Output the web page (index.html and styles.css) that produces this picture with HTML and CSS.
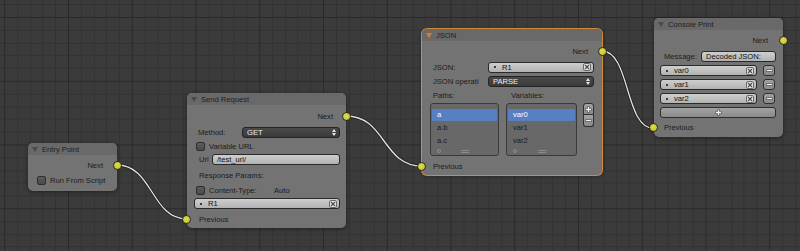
FILE: index.html
```html
<!DOCTYPE html>
<html>
<head>
<meta charset="utf-8">
<link rel="stylesheet" href="styles.css">
</head>
<body>
<div class="canvas">
  <svg class="backdrop" width="800" height="251" viewBox="0 0 800 251">
    <defs>
      <pattern id="grid" x="4.25" y="17" width="63.75" height="63.75" patternUnits="userSpaceOnUse">
        <g shape-rendering="crispEdges">
          <rect x="12.75" y="0" width="1" height="63.75" fill="#333333"/>
          <rect x="25.5" y="0" width="1" height="63.75" fill="#333333"/>
          <rect x="38.25" y="0" width="1" height="63.75" fill="#333333"/>
          <rect x="51" y="0" width="1" height="63.75" fill="#333333"/>
          <rect x="0" y="12.75" width="63.75" height="1" fill="#333333"/>
          <rect x="0" y="25.5" width="63.75" height="1" fill="#333333"/>
          <rect x="0" y="38.25" width="63.75" height="1" fill="#333333"/>
          <rect x="0" y="51" width="63.75" height="1" fill="#333333"/>
          <rect x="0" y="0" width="1" height="63.75" fill="#2a2a2a"/>
          <rect x="0" y="0" width="63.75" height="1" fill="#2a2a2a"/>
        </g>
      </pattern>
    </defs>
    <rect width="800" height="251" fill="#3b3b3b"/>
    <rect width="800" height="251" fill="url(#grid)"/>
    <g class="wire">
      <path d="M117,165 C153,165 151,219 187,219"/>
      <path d="M346,116 C386,116 382,166 422,166"/>
      <path d="M602,51 C630,51 625,128 653,128"/>
    </g>
    <g class="wire-core">
      <path d="M117,165 C153,165 151,219 187,219"/>
      <path d="M346,116 C386,116 382,166 422,166"/>
      <path d="M602,51 C630,51 625,128 653,128"/>
    </g>
  </svg>

  <!-- Entry Point -->
  <div class="node node-entry">
    <div class="node-header"><span class="tri"></span><span>Entry Point</span></div>
    <div class="node-body body-entry">
      <div class="row out"><span>Next</span><span class="socket socket-r"></span></div>
      <div class="row check-row"><span class="checkbox"></span><span>Run From Script</span></div>
    </div>
  </div>

  <!-- Send Request -->
  <div class="node node-send">
    <div class="node-header"><span class="tri"></span><span>Send Request</span></div>
    <div class="node-body body-send">
      <div class="row out"><span>Next</span><span class="socket socket-r"></span></div>
      <div class="row"><span class="label label-method">Method:</span>
        <span class="dropdown"><span>GET</span>
          <svg class="updown" width="4" height="7" viewBox="0 0 4 7"><path d="M0,3 L2,0 L4,3Z M0,4 L2,7 L4,4Z" fill="#e8e8e8"/></svg>
        </span>
      </div>
      <div class="row check-row"><span class="checkbox"></span><span>Variable URL</span></div>
      <div class="row"><span class="label label-url">Url</span><span class="field"><span>/test_url/</span></span></div>
      <div class="row"><span class="label">Response Params:</span></div>
      <div class="row check-row"><span class="checkbox"></span><span class="label-ct">Content-Type:</span><span>Auto</span></div>
      <div class="row row-r1">
        <span class="field"><span class="dot"></span><span class="grow">R1</span>
          <svg class="xicon" width="8" height="8" viewBox="0 0 8 8"><rect x="0.5" y="0.5" width="7" height="7" rx="1.5" fill="#e4e4e4" stroke="#6a6a6a"/><path d="M2,2 L6,6 M6,2 L2,6" stroke="#4a4a4a" stroke-width="1.1"/></svg>
        </span>
      </div>
      <div class="row in"><span class="socket socket-l"></span><span>Previous</span></div>
    </div>
  </div>

  <!-- JSON -->
  <div class="node node-json">
    <div class="node-header"><span class="tri tri-active"></span><span>JSON</span></div>
    <div class="node-body body-json">
      <div class="row out"><span>Next</span><span class="socket socket-r"></span></div>
      <div class="row"><span class="label label-json">JSON:</span>
        <span class="field"><span class="dot"></span><span class="grow">R1</span>
          <svg class="xicon" width="8" height="8" viewBox="0 0 8 8"><rect x="0.5" y="0.5" width="7" height="7" rx="1.5" fill="#e4e4e4" stroke="#6a6a6a"/><path d="M2,2 L6,6 M6,2 L2,6" stroke="#4a4a4a" stroke-width="1.1"/></svg>
        </span>
      </div>
      <div class="row"><span class="label label-json">JSON operati</span>
        <span class="dropdown"><span>PARSE</span>
          <svg class="updown" width="4" height="7" viewBox="0 0 4 7"><path d="M0,3 L2,0 L4,3Z M0,4 L2,7 L4,4Z" fill="#e8e8e8"/></svg>
        </span>
      </div>
      <div class="row"><span class="label label-paths">Paths:</span><span>Variables:</span></div>
      <div class="row lists-row">
        <div class="list list-paths">
          <div class="list-item selected">a</div>
          <div class="list-item">a.b</div>
          <div class="list-item">a.c</div>
          <div class="list-foot"><span class="ring"></span><span class="grip"></span></div>
        </div>
        <div class="list list-vars">
          <div class="list-item selected">var0</div>
          <div class="list-item">var1</div>
          <div class="list-item">var2</div>
          <div class="list-foot"><span class="ring"></span><span class="grip"></span></div>
        </div>
        <div class="pm">
          <span class="pm-btn pm-top"><svg width="7" height="7" viewBox="0 0 7 7"><path d="M3.5,0.5 V6.5 M0.5,3.5 H6.5" stroke="#4a4a4a" stroke-width="2.6"/><path d="M3.5,1 V6 M1,3.5 H6" stroke="#f2f2f2" stroke-width="1.3"/></svg></span>
          <span class="pm-btn pm-bottom"><svg width="7" height="7" viewBox="0 0 7 7"><path d="M0.5,3.5 H6.5" stroke="#4a4a4a" stroke-width="2.6"/><path d="M1,3.5 H6" stroke="#f2f2f2" stroke-width="1.3"/></svg></span>
        </div>
      </div>
      <div class="row in"><span class="socket socket-l"></span><span>Previous</span></div>
    </div>
  </div>

  <!-- Console Print -->
  <div class="node node-console">
    <div class="node-header"><span class="tri"></span><span>Console Print</span></div>
    <div class="node-body body-console">
      <div class="row out row-next"><span>Next</span><span class="socket socket-r"></span></div>
      <div class="row row-tight"><span class="label label-msg">Message:</span><span class="field"><span>Decoded JSON:</span></span></div>
      <div class="row row-tight row-var">
        <span class="field"><span class="dot"></span><span class="grow">var0</span>
          <svg class="xicon" width="8" height="8" viewBox="0 0 8 8"><rect x="0.5" y="0.5" width="7" height="7" rx="1.5" fill="#e4e4e4" stroke="#6a6a6a"/><path d="M2,2 L6,6 M6,2 L2,6" stroke="#4a4a4a" stroke-width="1.1"/></svg>
        </span>
        <span class="btn btn-minus"><svg width="7" height="7" viewBox="0 0 7 7"><path d="M0.5,3.5 H6.5" stroke="#4a4a4a" stroke-width="2.6"/><path d="M1,3.5 H6" stroke="#f2f2f2" stroke-width="1.3"/></svg></span>
      </div>
      <div class="row row-tight row-var">
        <span class="field"><span class="dot"></span><span class="grow">var1</span>
          <svg class="xicon" width="8" height="8" viewBox="0 0 8 8"><rect x="0.5" y="0.5" width="7" height="7" rx="1.5" fill="#e4e4e4" stroke="#6a6a6a"/><path d="M2,2 L6,6 M6,2 L2,6" stroke="#4a4a4a" stroke-width="1.1"/></svg>
        </span>
        <span class="btn btn-minus"><svg width="7" height="7" viewBox="0 0 7 7"><path d="M0.5,3.5 H6.5" stroke="#4a4a4a" stroke-width="2.6"/><path d="M1,3.5 H6" stroke="#f2f2f2" stroke-width="1.3"/></svg></span>
      </div>
      <div class="row row-tight row-var">
        <span class="field"><span class="dot"></span><span class="grow">var2</span>
          <svg class="xicon" width="8" height="8" viewBox="0 0 8 8"><rect x="0.5" y="0.5" width="7" height="7" rx="1.5" fill="#e4e4e4" stroke="#6a6a6a"/><path d="M2,2 L6,6 M6,2 L2,6" stroke="#4a4a4a" stroke-width="1.1"/></svg>
        </span>
        <span class="btn btn-minus"><svg width="7" height="7" viewBox="0 0 7 7"><path d="M0.5,3.5 H6.5" stroke="#4a4a4a" stroke-width="2.6"/><path d="M1,3.5 H6" stroke="#f2f2f2" stroke-width="1.3"/></svg></span>
      </div>
      <div class="row row-tight row-add">
        <span class="btn btn-add"><svg width="7" height="7" viewBox="0 0 7 7"><path d="M3.5,0.5 V6.5 M0.5,3.5 H6.5" stroke="#4a4a4a" stroke-width="2.6"/><path d="M3.5,1 V6 M1,3.5 H6" stroke="#f2f2f2" stroke-width="1.3"/></svg></span>
      </div>
      <div class="row in row-prev"><span class="socket socket-l"></span><span>Previous</span></div>
    </div>
  </div>
</div>
</body>
</html>
```

FILE: styles.css
```css
* { box-sizing: border-box; }
html, body { margin: 0; padding: 0; background: #3b3b3b; }
.canvas {
  position: relative;
  width: 800px;
  height: 251px;
  overflow: hidden;
  font-family: "Liberation Sans", Arial, sans-serif;
  font-size: 7.6px;
  color: #1b1b1b;
}
.backdrop { position: absolute; left: 0; top: 0; display: block; }
.wire path { fill: none; stroke: #1e1e1e; stroke-width: 2.8; }
.wire-core path { fill: none; stroke: #e2e2e2; stroke-width: 1.3; }

/* nodes */
.node {
  position: absolute;
  background: #737373;
  border-radius: 5px;
  box-shadow: 0 1px 4px rgba(0,0,0,0.45);
  display: flex;
  flex-direction: column;
}
.node-entry { left: 28px; top: 143px; width: 89px; height: 48px; }
.node-send { left: 187px; top: 93px; width: 159px; height: 135px; }
.node-json { left: 422px; top: 29px; width: 180px; height: 146px; box-shadow: 0 0 0 1px #d08a3a, 0 1px 4px rgba(0,0,0,0.45); }
.node-console { left: 654px; top: 18px; width: 129px; height: 119px; }

.node-header {
  height: 12px;
  flex: 0 0 12px;
  background: #696969;
  border-radius: 5px 5px 0 0;
  display: flex;
  align-items: center;
  gap: 4px;
  padding-left: 4px;
  color: #1e1e1e;
}
.tri {
  width: 0; height: 0;
  border-left: 3.5px solid transparent;
  border-right: 3.5px solid transparent;
  border-top: 5px solid #4a4a4a;
}
.tri-active { border-top-color: #e6781e; }

.node-body { display: flex; flex-direction: column; flex: 1; }
.row {
  position: relative;
  display: flex;
  align-items: center;
  white-space: nowrap;
}
.out { justify-content: flex-end; }
.socket {
  position: absolute;
  top: 50%;
  width: 9px;
  height: 9px;
  margin-top: -4.5px;
  border-radius: 50%;
  background: radial-gradient(circle at 45% 40%, #dede4e, #bcbc2e);
  border: 1px solid #2f2f18;
}
.socket-r { right: -5px; }
.socket-l { left: -5px; }

/* widgets */
.checkbox {
  width: 9px; height: 9px;
  flex: 0 0 9px;
  border: 1px solid #2e2e2e;
  border-radius: 2px;
  background: linear-gradient(#5c5c5c, #4a4a4a);
  margin-right: 4px;
}
.field {
  flex: 1;
  height: 11px;
  display: flex;
  align-items: center;
  border: 1px solid #2a2a2a;
  border-radius: 3px;
  background: linear-gradient(#cfcfcf, #b2b2b2);
  padding: 0 2px 0 4px;
  color: #111;
  overflow: hidden;
}
.dot { width: 2px; height: 2px; background: #111; border-radius: 1px; margin: 0 6px 0 1px; flex: 0 0 2px; }
.grow { flex: 1; }
.xicon { display: block; flex: 0 0 8px; }
.dropdown {
  flex: 1;
  height: 11px;
  display: flex;
  align-items: center;
  justify-content: space-between;
  border: 1px solid #232323;
  border-radius: 3px;
  background: linear-gradient(#4a4a4a, #3a3a3a);
  color: #f0f0f0;
  padding: 0 3px 0 4px;
}
.updown { display: block; }
.label { color: #1b1b1b; }

/* entry */
.body-entry { padding-top: 3px; }
.body-entry .out { height: 14px; padding-right: 14px; }
.body-entry .check-row { height: 17px; padding-left: 9px; }

/* send request */
.body-send { padding-top: 4px; }
.body-send .row { padding: 0 6px 0 8px; }
.body-send .row:nth-child(1) { height: 15px; padding-right: 13px; }
.body-send .row:nth-child(2) { height: 16px; }
.body-send .row:nth-child(3) { height: 13px; padding-left: 9px; }
.body-send .row:nth-child(4) { height: 13px; }
.body-send .row:nth-child(5) { height: 19px; padding-left: 12px; }
.body-send .row:nth-child(6) { height: 10px; padding-left: 9px; }
.body-send .row:nth-child(7) { height: 17px; padding-left: 7px; }
.body-send .row:nth-child(8) { height: 14px; padding-left: 12px; }
.label-method { flex: 0 0 47px; padding-left: 3px; }
.label-url { flex: 0 0 17px; padding-left: 4px; }
.label-ct { flex: 0 0 65px; }

/* json */
.body-json { padding-top: 3px; }
.body-json .row { padding: 0 8px 0 11px; }
.body-json .row:nth-child(1) { height: 15px; padding-right: 14px; }
.body-json .row:nth-child(2) { height: 16px; }
.body-json .row:nth-child(3) { height: 13px; }
.body-json .row:nth-child(4) { height: 14px; }
.body-json .row:nth-child(5) { height: 55px; align-items: flex-start; padding-left: 8px; padding-top: 1px; }
.body-json .row:nth-child(6) { height: 18px; }
.label-json { flex: 0 0 55px; overflow: hidden; }
.label-paths { flex: 0 0 78px; }
.list {
  height: 53px;
  border: 1px solid #3a3a3a;
  border-radius: 3px;
  background: #686868;
  padding: 5px 1px 0 1px;
  display: flex;
  flex-direction: column;
}
.list-paths { width: 69px; margin-right: 7px; }
.list-vars { width: 71px; margin-right: 6px; }
.list-item { height: 13px; line-height: 12px; padding-left: 5px; color: #1b1b1b; }
.list-item.selected { background: #5680c2; color: #fff; height: 12px; margin-bottom: 1px; }
.list-foot { position: relative; height: 7px; display: flex; align-items: center; justify-content: center; }
.ring { position: absolute; left: 5px; top: 1px; width: 4px; height: 4px; border-radius: 50%; border: 1px solid #8c8c8c; }
.grip { width: 8px; height: 3px; border-top: 1px solid #8c8c8c; border-bottom: 1px solid #8c8c8c; }
.pm { display: flex; flex-direction: column; width: 11px; }
.pm-btn {
  height: 12px;
  display: flex; align-items: center; justify-content: center;
  border: 1px solid #2e2e2e;
  background: linear-gradient(#a2a2a2, #8a8a8a);
}
.pm-top { border-radius: 3px 3px 0 0; }
.pm-bottom { border-radius: 0 0 3px 3px; border-top: none; }
.pm-btn svg, .btn svg { display: block; }

/* console */
.body-console { padding-top: 3px; }
.body-console .row-next { height: 15px; padding-right: 15px; }
.body-console .row-tight { height: 11px; margin-top: 3px; padding: 0 7px 0 6px; }
.body-console .row-tight:nth-child(2) { padding-left: 10px; }
.label-msg { flex: 0 0 37px; }
.body-console .row-var { padding-right: 8px; }
.btn {
  height: 11px;
  display: flex; align-items: center; justify-content: center;
  border: 1px solid #2e2e2e;
  border-radius: 3px;
  background: linear-gradient(#a2a2a2, #8a8a8a);
}
.btn-minus { flex: 0 0 12px; margin-left: 6px; }
.btn-add { flex: 1; }
.body-console .row-prev { height: 19px; padding-left: 10px; }
```
